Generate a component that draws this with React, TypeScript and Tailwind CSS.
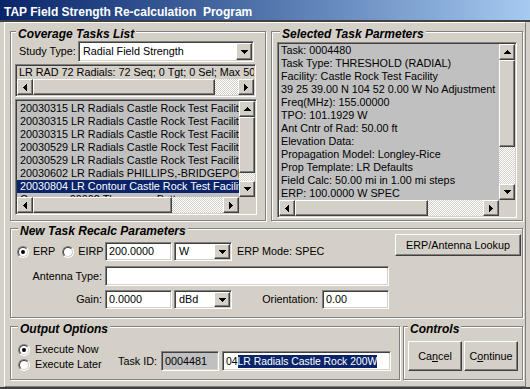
import React from "react";

const raised =
  "bg-[#d4d0c8] border border-t-white border-l-white border-r-[#404040] border-b-[#404040] shadow-[inset_-1px_-1px_0_#808080]";
const sunken =
  "border border-t-[#808080] border-l-[#808080] border-r-white border-b-white shadow-[inset_1px_1px_0_#404040,inset_-1px_-1px_0_#d4d0c8]";
const checker =
  "bg-[image:repeating-conic-gradient(#fff_0_25%,#d4d0c8_0_50%)] bg-[length:2px_2px]";

type Dir = "up" | "down" | "left" | "right";

const arrowPaths: Record<Dir, string> = {
  up: "M3 0h1v1h1v1h1v1h1v1H0V3h1V2h1V1h1z",
  down: "M0 0h7v1H6v1H5v1H4v1H3V3H2V2H1V1H0z",
  left: "M3 0h1v7H3V6H2V5H1V4H0V3h1V2h1V1h1z",
  right: "M0 0h1v1h1v1h1v1h1v1H3v1H2v1H1v1H0z",
};

function Arrow({ dir }: { dir: Dir }) {
  const vertical = dir === "up" || dir === "down";
  return (
    <svg
      width={vertical ? 7 : 4}
      height={vertical ? 4 : 7}
      viewBox={vertical ? "0 0 7 4" : "0 0 4 7"}
      shapeRendering="crispEdges"
    >
      <path d={arrowPaths[dir]} fill="#000" />
    </svg>
  );
}

function ArrowBtn({ dir, className = "w-[16px] h-[16px]" }: { dir: Dir; className?: string }) {
  return (
    <div className={`${raised} ${className} shrink-0 flex items-center justify-center`}>
      <Arrow dir={dir} />
    </div>
  );
}

function HScroll({ thumb }: { thumb: string }) {
  return (
    <div className="flex h-[16px]">
      <ArrowBtn dir="left" />
      <div className={`flex-1 flex ${checker}`}>
        <div className={`${raised} h-full ${thumb}`} />
      </div>
      <ArrowBtn dir="right" />
    </div>
  );
}

function VScroll({ thumb }: { thumb: string }) {
  return (
    <div className="flex flex-col w-[16px]">
      <ArrowBtn dir="up" />
      <div className={`flex-1 flex flex-col ${checker}`}>
        <div className={`${raised} w-full ${thumb}`} />
      </div>
      <ArrowBtn dir="down" />
    </div>
  );
}

function Combo({ value, className }: { value: string; className: string }) {
  return (
    <div className={`${sunken} bg-white flex p-[1px] ${className}`}>
      <span className="flex-1 pl-[3px] self-center whitespace-nowrap overflow-hidden">{value}</span>
      <ArrowBtn dir="down" className="w-[16px] h-full" />
    </div>
  );
}

function Edit({ children, className }: { children?: React.ReactNode; className: string }) {
  return (
    <div className={`${sunken} px-[3px] flex items-center whitespace-nowrap overflow-hidden ${className}`}>
      {children}
    </div>
  );
}

function Radio({ checked }: { checked?: boolean }) {
  return (
    <span className="w-[12px] h-[12px] rounded-full border border-t-[#808080] border-l-[#808080] border-r-white border-b-white shrink-0 flex">
      <span className="flex-1 rounded-full border border-t-[#404040] border-l-[#404040] border-r-[#d4d0c8] border-b-[#d4d0c8] bg-white flex items-center justify-center">
        {checked && <span className="w-[4px] h-[4px] rounded-full bg-black" />}
      </span>
    </span>
  );
}

function Group({
  title,
  titleLeft,
  className,
  children,
}: {
  title: string;
  titleLeft: string;
  className: string;
  children?: React.ReactNode;
}) {
  return (
    <div className={`relative border border-[#808080] shadow-[inset_1px_1px_0_#fff,1px_1px_0_#fff] ${className}`}>
      <span
        className={`absolute -top-[5px] ${titleLeft} px-[2px] bg-[#d4d0c8] text-[12px] leading-[14px] font-bold italic`}
      >
        {title}
      </span>
      {children}
    </div>
  );
}

const tasks = [
  "20030315 LR Radials Castle Rock Test Facility",
  "20030315 LR Radials Castle Rock Test Facility",
  "20030315 LR Radials Castle Rock Test Facility",
  "20030529 LR Radials Castle Rock Test Facility",
  "20030529 LR Radials Castle Rock Test Facility",
  "20030602 LR Radials PHILLIPS,-BRIDGEPORT",
  "20030804 LR Contour Castle Rock Test Facility",
  "Coverage 00002 Thompson Butte",
];

const params = [
  "Task: 0004480",
  "Task Type: THRESHOLD (RADIAL)",
  "Facility: Castle Rock Test Facility",
  "39 25 39.00 N 104 52 0.00 W No Adjustment",
  "Freq(MHz): 155.00000",
  "TPO: 101.1929 W",
  "Ant Cntr of Rad: 50.00 ft",
  "Elevation Data:",
  "Propagation Model: Longley-Rice",
  "Prop Template: LR Defaults",
  "Field Calc: 50.00 mi in 1.00 mi steps",
  "ERP: 100.0000 W SPEC",
];

export default function App() {
  return (
    <div className="w-[530px] h-[389px] bg-[#d4d0c8] overflow-hidden font-['Liberation_Sans',Arial,sans-serif] text-[10.8px] leading-[13px] text-black select-none">
      <div className="h-[22px] border-b-2 border-[#404040] bg-gradient-to-r from-[#0a246a] to-[#a6caf0] text-white font-bold text-[12px] leading-[16px] pt-[4px] pl-[4px] whitespace-pre">
        TAP Field Strength Re-calculation  Program
      </div>
      <div className="h-[367px] px-[4px] border-b-2 border-[#404040]">
        <div className="h-full border border-t-white border-l-white border-r-[#808080] border-b-[#808080] pl-[5px] pt-[8px]">
          <div className="flex">
            <Group title="Coverage Tasks List" titleLeft="left-[5px]" className="w-[256px] h-[190px]">
              <div className="flex items-center mt-[9px] ml-[8px]">
                <span className="w-[59px]">Study Type:</span>
                <Combo value="Radial Field Strength" className="w-[176px] h-[21px]" />
              </div>
              <div className={`${sunken} ml-[4px] mt-[2px] w-[241px] h-[33px] p-[1px] flex flex-col`}>
                <div className="h-[13px] pl-[2px] whitespace-nowrap overflow-hidden">
                  LR RAD 72 Radials: 72 Seq; 0 Tgt; 0 Sel; Max 50 Radials
                </div>
                <HScroll thumb="w-[182px]" />
              </div>
              <div
                className={`${sunken} ml-[4px] mt-[2px] w-[242px] h-[116px] p-[1px] grid grid-cols-[1fr_16px] grid-rows-[1fr_16px] bg-[#c0c0c0]`}
              >
                <div className="overflow-hidden pt-[1px]">
                  {tasks.map((t, i) => (
                    <div
                      key={i}
                      className={`h-[13px] pl-[3px] whitespace-nowrap ${i === 6 ? "bg-[#0a246a] text-white" : ""}`}
                    >
                      {t}
                    </div>
                  ))}
                </div>
                <VScroll thumb="h-[56px]" />
                <HScroll thumb="w-[139px]" />
                <div className="bg-[#d4d0c8]" />
              </div>
            </Group>
            <Group title="Selected Task Parmeters" titleLeft="left-[8px]" className="ml-[5px] w-[252px] h-[190px]">
              <div
                className={`${sunken} ml-[5px] mt-[10px] w-[240px] h-[176px] p-[1px] grid grid-cols-[1fr_16px] grid-rows-[1fr_16px] bg-[#c0c0c0]`}
              >
                <div className="overflow-hidden pl-[2px]">
                  {params.map((p, i) => (
                    <div key={i} className="h-[13px] whitespace-nowrap">
                      {p}
                    </div>
                  ))}
                </div>
                <VScroll thumb="h-[87px]" />
                <HScroll thumb="w-[133px]" />
                <div className="bg-[#d4d0c8]" />
              </div>
            </Group>
          </div>

          <Group title="New Task Recalc Parameters" titleLeft="left-[7px]" className="mt-[7px] w-[513px] h-[90px]">
            <div className="flex">
              <div className="flex flex-col pt-[13px]">
                <div className="flex items-center h-[19px]">
                  <div className="w-[94px] flex items-center pl-[6px]">
                    <Radio checked />
                    <span className="ml-[4px]">ERP</span>
                    <span className="ml-[7px]">
                      <Radio />
                    </span>
                    <span className="ml-[4px]">EIRP</span>
                  </div>
                  <Edit className="w-[67px] h-[19px] bg-white">200.0000</Edit>
                  <Combo value="W" className="ml-[2px] w-[58px] h-[19px]" />
                  <span className="ml-[5px]">ERP Mode: SPEC</span>
                </div>
                <div className="flex items-center h-[20px] mt-[5px]">
                  <span className="w-[94px] text-right pr-[3px]">Antenna Type:</span>
                  <Edit className="w-[284px] h-[20px] bg-white" />
                </div>
                <div className="flex items-center h-[19px] mt-[4px]">
                  <span className="w-[94px] text-right pr-[3px]">Gain:</span>
                  <Edit className="w-[67px] h-[19px] bg-white">0.0000</Edit>
                  <Combo value="dBd" className="ml-[2px] w-[58px] h-[19px]" />
                  <span className="w-[90px] text-right pr-[4px]">Orientation:</span>
                  <Edit className="w-[67px] h-[19px] bg-white">0.00</Edit>
                </div>
              </div>
              <button
                className={`${raised} ml-auto mt-[5px] mr-[1px] w-[126px] h-[22px] flex items-center justify-center`}
              >
                ERP/Antenna Lookup
              </button>
            </div>
          </Group>

          <div className="flex mt-[8px]">
            <Group title="Output Options" titleLeft="left-[7px]" className="w-[390px] h-[54px]">
              <div className="flex">
                <div className="flex flex-col pt-[15px] pl-[7px] w-[107px]">
                  <div className="flex items-center h-[15px]">
                    <Radio checked />
                    <span className="ml-[5px]">Execute Now</span>
                  </div>
                  <div className="flex items-center h-[15px]">
                    <Radio />
                    <span className="ml-[5px]">Execute Later</span>
                  </div>
                </div>
                <div className="flex items-center mt-[24px] h-[20px]">
                  <span className="w-[43px]">Task ID:</span>
                  <Edit className="w-[58px] h-[20px] bg-[#c0c0c0]">0004481</Edit>
                  <Edit className="ml-[3px] w-[169px] h-[20px] bg-white text-[10.4px]">
                    04<span className="bg-[#0a246a] text-white"> LR Radials Castle Rock 200W</span>
                  </Edit>
                </div>
              </div>
            </Group>
            <Group title="Controls" titleLeft="left-[4px]" className="ml-[3px] w-[120px] h-[54px]">
              <div className="flex ml-[4px] mt-[14px] gap-[2px]">
                <button className={`${raised} w-[54px] h-[30px] flex items-center justify-center`}>
                  Ca<u>n</u>cel
                </button>
                <button className={`${raised} w-[54px] h-[30px] flex items-center justify-center`}>
                  C<u>o</u>ntinue
                </button>
              </div>
            </Group>
          </div>
        </div>
      </div>
    </div>
  );
}
